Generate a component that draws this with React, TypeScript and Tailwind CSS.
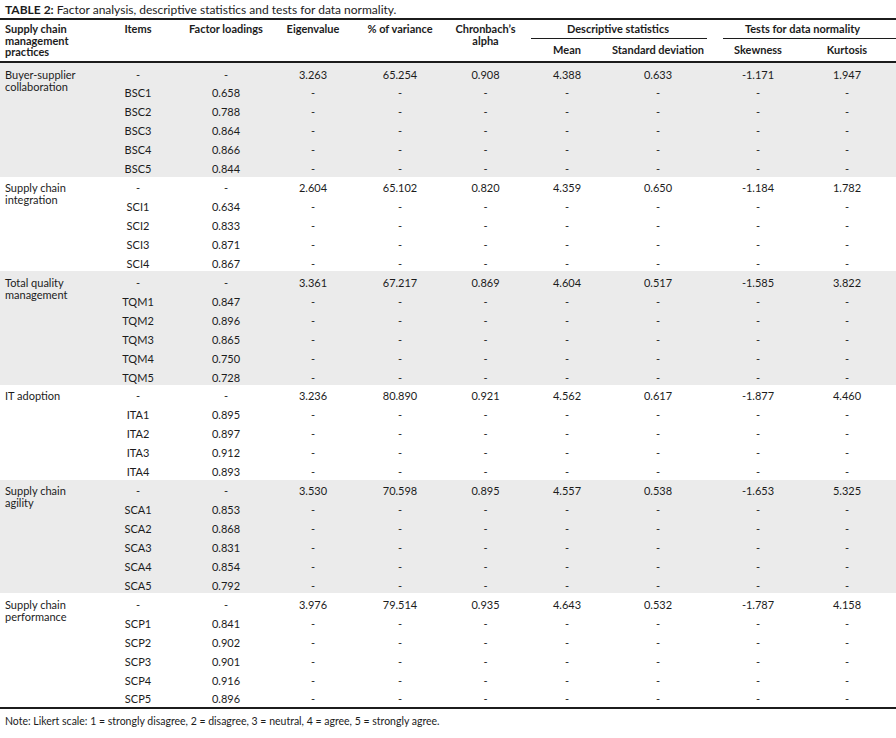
import React from "react";

type Group = {
  name: string;
  gray: boolean;
  head: string[];
  items: [string, string][];
};

const groups: Group[] = [
  {
    name: "Buyer-supplier collaboration",
    gray: true,
    head: ["3.263", "65.254", "0.908", "4.388", "0.633", "-1.171", "1.947"],
    items: [["BSC1", "0.658"], ["BSC2", "0.788"], ["BSC3", "0.864"], ["BSC4", "0.866"], ["BSC5", "0.844"]],
  },
  {
    name: "Supply chain integration",
    gray: false,
    head: ["2.604", "65.102", "0.820", "4.359", "0.650", "-1.184", "1.782"],
    items: [["SCI1", "0.634"], ["SCI2", "0.833"], ["SCI3", "0.871"], ["SCI4", "0.867"]],
  },
  {
    name: "Total quality management",
    gray: true,
    head: ["3.361", "67.217", "0.869", "4.604", "0.517", "-1.585", "3.822"],
    items: [["TQM1", "0.847"], ["TQM2", "0.896"], ["TQM3", "0.865"], ["TQM4", "0.750"], ["TQM5", "0.728"]],
  },
  {
    name: "IT adoption",
    gray: false,
    head: ["3.236", "80.890", "0.921", "4.562", "0.617", "-1.877", "4.460"],
    items: [["ITA1", "0.895"], ["ITA2", "0.897"], ["ITA3", "0.912"], ["ITA4", "0.893"]],
  },
  {
    name: "Supply chain agility",
    gray: true,
    head: ["3.530", "70.598", "0.895", "4.557", "0.538", "-1.653", "5.325"],
    items: [["SCA1", "0.853"], ["SCA2", "0.868"], ["SCA3", "0.831"], ["SCA4", "0.854"], ["SCA5", "0.792"]],
  },
  {
    name: "Supply chain performance",
    gray: false,
    head: ["3.976", "79.514", "0.935", "4.643", "0.532", "-1.787", "4.158"],
    items: [["SCP1", "0.841"], ["SCP2", "0.902"], ["SCP3", "0.901"], ["SCP4", "0.916"], ["SCP5", "0.896"]],
  },
];

const rowGrid = "grid grid-cols-[88px_88px_86px_88px_83px_80px_102px_98px_89px] h-[18.94px] pt-[3.5px] leading-[15.44px] text-center";

function Row({ cells }: { cells: string[] }) {
  return (
    <div className={rowGrid}>
      {cells.map((c, i) => (
        <div key={i} className={i === 8 ? "pr-[9px]" : ""}>
          {c}
        </div>
      ))}
    </div>
  );
}

export default function App() {
  return (
    <div
      className="w-[896px] h-[738px] bg-white text-[#1c1c1c] text-[11px]"
      style={{ fontFamily: "Lato, 'Open Sans', sans-serif" }}
    >
      <div className="h-[18px] pt-[1px] pl-[5px] text-[12px] leading-[17px]">
        <span className="font-bold">TABLE 2:</span> Factor analysis, descriptive statistics and tests for data normality.
      </div>
      <div className="border-t-2 border-b-2 border-[#1c1c1c] grid grid-cols-[94px_88px_88px_86px_88px_83px_80px_102px_98px_89px] grid-rows-[19px_22px] font-bold leading-[11.5px]">
        <div className="row-span-2 pt-[3px] pl-[5px] pr-[4px]">Supply chain management practices</div>
        <div className="row-span-2 pt-[3px] text-center">Items</div>
        <div className="row-span-2 pt-[3px] text-center">Factor loadings</div>
        <div className="row-span-2 pt-[3px] text-center">Eigenvalue</div>
        <div className="row-span-2 pt-[3px] text-center">% of variance</div>
        <div className="row-span-2 pt-[3px] text-center leading-[11.5px]">
          Chronbach’s
          <br />
          alpha
        </div>
        <div className="col-span-2 flex flex-col">
          <div className="pt-[3px] text-center h-[18px]">Descriptive statistics</div>
          <div className="ml-[4px] mr-[2px] border-b border-[#1c1c1c]" />
        </div>
        <div className="col-span-2 flex flex-col">
          <div className="pt-[3px] text-center h-[18px]">Tests for data normality</div>
          <div className="ml-[14px] border-b border-[#1c1c1c]" />
        </div>
        <div className="pt-[5px] text-center">Mean</div>
        <div className="pt-[5px] text-center">Standard deviation</div>
        <div className="pt-[5px] text-center">Skewness</div>
        <div className="pt-[5px] text-center pr-[9px]">Kurtosis</div>
      </div>
      <div className="border-b-2 border-[#1c1c1c]">
        {groups.map((g) => (
          <div key={g.name} className={"flex " + (g.gray ? "bg-[#ebebeb]" : "bg-white")}>
            <div className="w-[94px] shrink-0 pl-[5px] pr-[4px] pt-[5.5px] leading-[12px]">{g.name}</div>
            <div className="flex flex-col">
              <Row cells={["-", "-", ...g.head]} />
              {g.items.map(([it, fl]) => (
                <Row key={it} cells={[it, fl, "-", "-", "-", "-", "-", "-", "-"]} />
              ))}
            </div>
          </div>
        ))}
      </div>
      <div className="pl-[5px] pt-[6px] text-[10.5px] leading-[12px]">
        Note: Likert scale: 1 = strongly disagree, 2 = disagree, 3 = neutral, 4 = agree, 5 = strongly agree.
      </div>
    </div>
  );
}
